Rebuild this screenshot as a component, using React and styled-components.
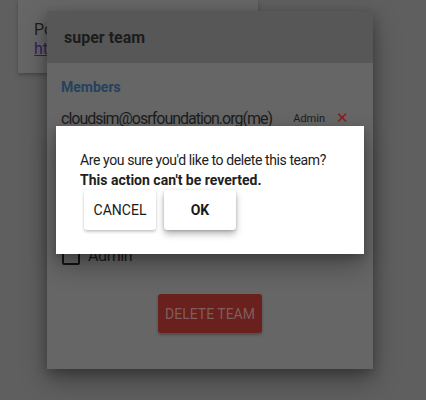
import styled, { createGlobalStyle } from "styled-components";

const GlobalStyle = createGlobalStyle`
  html, body {
    margin: 0;
    padding: 0;
    background: #5f5f5f;
    font-family: Roboto, "Noto Sans", sans-serif;
  }
`;

const Page = styled.div`
  position: relative;
  width: 426px;
  height: 400px;
  overflow: hidden;
  background: #5f5f5f;
`;

const Card = styled.div`
  margin-left: 18px;
  width: 240px;
  height: 73px;
  box-sizing: border-box;
  padding: 20px 16px 0;
  background: #666;
  box-shadow: 0 2px 4px rgba(0, 0, 0, 0.25);
  font-size: 16px;
  line-height: 19px;
  color: #1e1e1e;
`;

const CardLink = styled.a`
  color: #33205e;
  text-decoration: underline;
`;

const TeamDialog = styled.div`
  position: absolute;
  left: 47px;
  top: 11px;
  width: 326px;
  height: 358px;
  background: #666;
  box-shadow: 0 10px 24px rgba(0, 0, 0, 0.35), 0 4px 10px rgba(0, 0, 0, 0.2);
  display: flex;
  flex-direction: column;
`;

const TeamHeader = styled.div`
  height: 52px;
  display: flex;
  align-items: center;
  padding-left: 17px;
  background: #575757;
  font-size: 16px;
  font-weight: 700;
  color: #1c1c1c;
`;

const TeamBody = styled.div`
  padding: 15px 14px 0;
  display: flex;
  flex-direction: column;
`;

const SectionTitle = styled.div`
  font-size: 14px;
  font-weight: 700;
  line-height: 18px;
  color: #24425e;
`;

const MemberRow = styled.div`
  margin-top: 12px;
  display: flex;
  align-items: center;
  height: 20px;
  font-size: 16px;
  color: #1c1c1c;
`;

const MemberEmail = styled.span`
  flex: 1;
  letter-spacing: -1px;
  white-space: nowrap;
`;

const Role = styled.span`
  font-size: 11px;
  color: #1c1c1c;
  margin-right: 11px;
`;

const RemoveX = styled.span`
  font-size: 15px;
  line-height: 1;
  color: #8a1a1a;
  margin-right: 10px;
`;

const CheckRow = styled.label`
  margin-top: 118px;
  display: flex;
  align-items: center;
  gap: 8px;
  font-size: 16px;
  letter-spacing: -0.4px;
  color: #1c1c1c;
`;

const Box = styled.span`
  width: 14px;
  height: 14px;
  border: 2px solid #141414;
  border-radius: 2px;
  margin-left: 1px;
`;

const DeleteButton = styled.button`
  align-self: center;
  margin-top: 29px;
  width: 104px;
  height: 39px;
  border: none;
  border-radius: 3px;
  background: #6a201d;
  color: #7f5e5c;
  font-family: Roboto, sans-serif;
  font-size: 14px;
  box-shadow: 0 2px 3px rgba(0, 0, 0, 0.25);
`;

const ConfirmDialog = styled.div`
  position: absolute;
  left: 56px;
  top: 126px;
  width: 308px;
  height: 128px;
  box-sizing: border-box;
  padding: 24px 24px 0;
  background: #fff;
  box-shadow: 0 12px 24px rgba(0, 0, 0, 0.3), 0 4px 8px rgba(0, 0, 0, 0.2);
  color: #212121;
  font-size: 14px;
  line-height: 20px;
`;

const Question = styled.div`
  letter-spacing: -0.4px;
  white-space: nowrap;
`;

const Strong = styled.div`
  font-weight: 700;
`;

const Actions = styled.div`
  display: flex;
  gap: 8px;
  padding-left: 4px;
`;

const DialogButton = styled.button`
  width: 72px;
  height: 40px;
  border: none;
  border-radius: 3px;
  background: #fff;
  color: #1a1a1a;
  font-family: Roboto, sans-serif;
  font-size: 14px;
  font-weight: ${(p) => (p.$primary ? 700 : 400)};
  box-shadow: ${(p) =>
    p.$primary
      ? "0 4px 7px rgba(0,0,0,0.28), 0 1px 3px rgba(0,0,0,0.18)"
      : "0 2px 3px rgba(0,0,0,0.2), 0 0 2px rgba(0,0,0,0.1)"};
`;

export default function App() {
  return (
    <>
      <GlobalStyle />
      <Page>
        <Card>
          <div>Portal</div>
          <CardLink href="#">https://portal.example.org</CardLink>
        </Card>

        <TeamDialog>
          <TeamHeader>super team</TeamHeader>
          <TeamBody>
            <SectionTitle>Members</SectionTitle>
            <MemberRow>
              <MemberEmail>cloudsim@osrfoundation.org(me)</MemberEmail>
              <Role>Admin</Role>
              <RemoveX>✕</RemoveX>
            </MemberRow>
            <CheckRow>
              <Box />
              Admin
            </CheckRow>
            <DeleteButton>DELETE TEAM</DeleteButton>
          </TeamBody>
        </TeamDialog>

        <ConfirmDialog>
          <Question>Are you sure you'd like to delete this team?</Question>
          <Strong>This action can't be reverted.</Strong>
          <Actions>
            <DialogButton>CANCEL</DialogButton>
            <DialogButton $primary>OK</DialogButton>
          </Actions>
        </ConfirmDialog>
      </Page>
    </>
  );
}
